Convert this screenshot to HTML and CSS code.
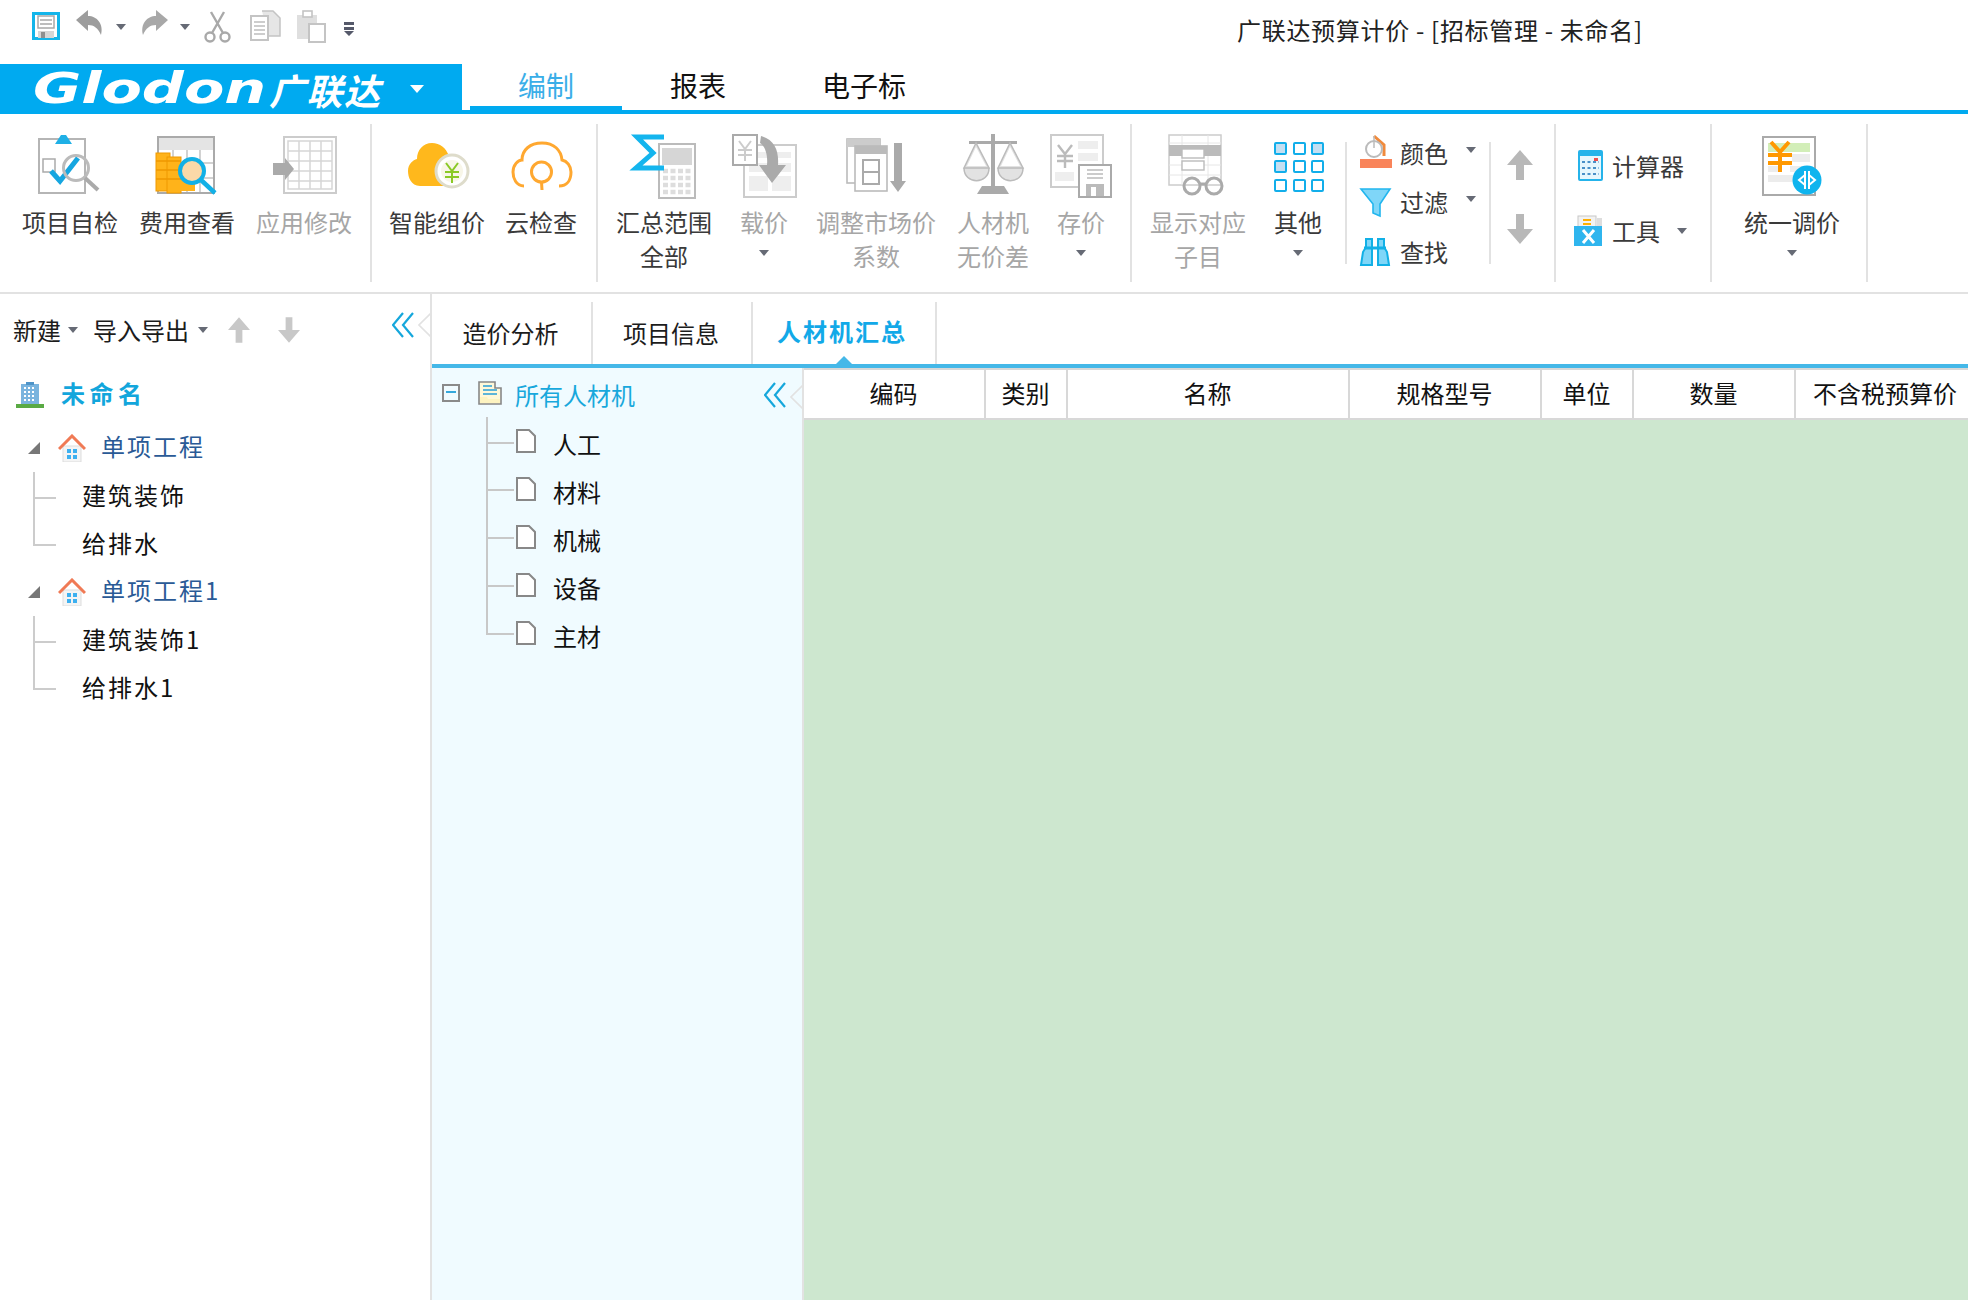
FILE: index.html
```html
<!DOCTYPE html>
<html lang="zh-CN">
<head>
<meta charset="utf-8">
<title>广联达预算计价</title>
<link rel="stylesheet" href="styles.css">
</head>
<body>
<header class="titlebar">
  <div class="qat">
    <svg width="44" height="64" viewBox="24 0 44 64"><rect x="33.5" y="13.5" width="25" height="25" fill="#fff" stroke="#13b5ea" stroke-width="3"/><rect x="38" y="16" width="16" height="12" fill="#fff" stroke="#a8a8a8" stroke-width="1.5"/><path d="M40 20H52M40 24H52" stroke="#a8a8a8" stroke-width="1.5"/><rect x="38" y="31" width="16" height="7" fill="#d6d6d6"/><rect x="41" y="32" width="4" height="6" fill="#8f8f8f"/></svg>
    <svg width="40" height="64" viewBox="68 0 40 64"><path d="M76 20L88 10V16C97 16 104 24 101 35C98 28 94 25 88 25V31Z" fill="#9d9d9d"/></svg>
    <svg width="26" height="64" viewBox="108 0 26 64"><path d="M116 24H126L121 30Z" fill="#666a75"/></svg>
    <svg width="40" height="64" viewBox="134 0 40 64"><path d="M168 20L156 10V16C147 16 140 24 143 35C146 28 150 25 156 25V31Z" fill="#a8a8a8"/></svg>
    <svg width="22" height="64" viewBox="174 0 22 64"><path d="M180 24H190L185 30Z" fill="#666a75"/></svg>
    <svg width="44" height="64" viewBox="196 0 44 64"><g fill="none" stroke="#a9a9a9" stroke-width="2.4"><circle cx="210" cy="37" r="4.5"/><circle cx="225" cy="37" r="4.5"/><path d="M212 33L224 12M223 33L211 12"/></g></svg>
    <svg width="48" height="64" viewBox="240 0 48 64"><path d="M262 11H273L280 18V36H268" fill="#e6e6e6" stroke="#c4c4c4" stroke-width="1.5"/><rect x="251" y="16" width="17" height="24" fill="#fff" stroke="#c4c4c4" stroke-width="2"/><path d="M254 22H265M254 26H265M254 30H265M254 34H265" stroke="#bdbdbd" stroke-width="1.5"/></svg>
    <svg width="48" height="64" viewBox="288 0 48 64"><rect x="297" y="15" width="20" height="24" fill="#dfdfdf"/><rect x="303" y="11" width="9" height="6" fill="#fff" stroke="#c4c4c4" stroke-width="1.6"/><rect x="309" y="24" width="16" height="18" fill="#fff" stroke="#c4c4c4" stroke-width="2"/></svg>
    <svg width="26" height="64" viewBox="336 0 26 64"><path d="M344 22H354V25H344ZM344 27H354V30H344ZM344 31H354L349 36Z" fill="#55596a"/></svg>
  </div>
  <h1 class="wintitle">广联达预算计价 - [招标管理 - 未命名]</h1>
</header>

<nav class="tabbar">
  <div class="logo">
    <span class="logo-en">Glodon</span><span class="logo-cn">广联达</span><span class="logo-caret"></span>
  </div>
  <div class="menu">
    <span class="menu-tab is-active">编制</span>
    <span class="menu-tab report">报表</span>
    <span class="menu-tab esign">电子标</span>
  </div>
</nav>

<section class="ribbon">
  <div class="group g1">
    <div class="item">
      <svg class="ic" viewBox="35 130 70 70"><rect x="39" y="139" width="46" height="54" fill="#fff" stroke="#b5b5b5" stroke-width="2"/><path d="M55 144L61 135H66L72 144Z" fill="#1fb0e6"/><rect x="43" y="159" width="12" height="13" fill="none" stroke="#aaa" stroke-width="1.5"/><path d="M51 171L60 181L78 158" fill="none" stroke="#16a6e0" stroke-width="5"/><circle cx="76" cy="168" r="12.5" fill="none" stroke="#bbb" stroke-width="3"/><path d="M85 178L98 190" stroke="#aaa" stroke-width="4"/></svg>
      <span class="lb">项目自检</span>
    </div>
    <div class="item">
      <svg class="ic" viewBox="153 130 70 70"><rect x="159" y="137" width="56" height="56" fill="#fff" stroke="#aaa" stroke-width="2"/><rect x="160" y="138" width="54" height="12" fill="#e4e4e4"/><path d="M174 150V192M188 150V192M201 150V192M160 163H214M160 178H214" stroke="#c4c4c4" stroke-width="1.5"/><rect x="157" y="153" width="14" height="38" fill="#ffb31a" stroke="#f09a00"/><rect x="168" y="157" width="14" height="36" fill="#ffb31a" stroke="#f09a00"/><rect x="181" y="166" width="15" height="25" fill="#ffb31a"/><path d="M157 161H182M157 170H182M157 179H182" stroke="#ef9800" stroke-width="1.4"/><circle cx="193" cy="171" r="12" fill="#fbd9a8" stroke="#12b0e6" stroke-width="4"/><path d="M202 180L216 193" stroke="#12b0e6" stroke-width="4.5"/></svg>
      <span class="lb">费用查看</span>
    </div>
    <div class="item is-off">
      <svg class="ic" viewBox="268 130 70 70"><rect x="283" y="137" width="52" height="56" fill="#fff" stroke="#ccc" stroke-width="2"/><rect x="287" y="141" width="44" height="48" fill="none" stroke="#d6d6d6" stroke-width="1.5"/><path d="M298 141V189M309 141V189M320 141V189M287 151H331M287 161H331M287 171H331M287 181H331" stroke="#d6d6d6" stroke-width="1.5"/><path d="M272 163H284V158L293 169L284 180V175H272Z" fill="#aaa"/></svg>
      <span class="lb">应用修改</span>
    </div>
  </div>

  <div class="group g2">
    <div class="item">
      <svg class="ic" viewBox="402 130 70 70"><path d="M420 186C411 186 408 177 408 171C408 164 413 160 417 159C417 150 423 143 432 143C440 143 446 148 449 156V186Z" fill="#ffb81c"/><circle cx="452" cy="171" r="16" fill="#fff" stroke="#dedccb" stroke-width="3"/><circle cx="452" cy="171" r="11" fill="#f8f6e8"/><path d="M446 163L452 171L458 163M445 172H459M445 177H459M452 171V183" fill="none" stroke="#8ac926" stroke-width="2"/></svg>
      <span class="lb">智能组价</span>
    </div>
    <div class="item">
      <svg class="ic" viewBox="507 130 70 70"><g fill="none" stroke="#ffa830" stroke-width="3"><path d="M525 186C517 186 514 178 514 172C514 165 519 160 523 160C523 150 531 143 543 143C555 143 562 150 563 160C568 161 572 166 572 172C572 180 568 186 560 186"/><circle cx="542.5" cy="172" r="10"/><path d="M542.5 182L543 190"/></g></svg>
      <span class="lb">云检查</span>
    </div>
  </div>

  <div class="group g3">
    <div class="item">
      <svg class="ic" viewBox="629 130 70 70"><rect x="659" y="144" width="36" height="54" fill="#fff" stroke="#bbb" stroke-width="2"/><rect x="662" y="148" width="30" height="17" fill="#d6d6d6"/><path d="M663 171H692M663 178H692M663 185H692M663 192H692" stroke="#ddd" stroke-width="4.5" stroke-dasharray="5 2.5"/><path d="M664 137H637L653 153L636 168H664" fill="none" stroke="#14b5ee" stroke-width="5"/></svg>
      <span class="lb">汇总范围</span><span class="lb">全部</span>
    </div>
    <div class="item is-off">
      <svg class="ic" viewBox="729 130 70 70"><rect x="744" y="145" width="52" height="52" fill="#fff" stroke="#ccc" stroke-width="2"/><path d="M749 152H791V158H749ZM749 163H768V172H749ZM772 163H791V172H772ZM749 176H768V191H749ZM772 176H791V191H772Z" fill="#eee"/><rect x="733" y="135" width="24" height="30" fill="#fff" stroke="#aaa" stroke-width="2"/><path d="M739 141L745 149L751 141M738 150H752M738 155H752M745 149V161" fill="none" stroke="#ccc" stroke-width="2"/><path d="M761 136C775 140 779 151 778 165H786L772 183L759 165H767C768 155 765 146 760 143Z" fill="#aaa"/></svg>
      <span class="lb">载价</span><span class="lb"><i class="caret"></i></span>
    </div>
    <div class="item is-off">
      <svg class="ic" viewBox="841 130 70 70"><rect x="847" y="139" width="33" height="44" fill="#fff" stroke="#bbb" stroke-width="1.6"/><rect x="847" y="139" width="33" height="8" fill="#ccc"/><rect x="855" y="146" width="32" height="45" fill="#fff" stroke="#bbb" stroke-width="1.6"/><rect x="855" y="146" width="32" height="8" fill="#bbb"/><rect x="863" y="160" width="16" height="24" fill="#fff" stroke="#aaa" stroke-width="2"/><path d="M863 172H879" stroke="#aaa" stroke-width="2"/><path d="M894 143H902V181H906L898 192L890 181H894Z" fill="#aaa"/></svg>
      <span class="lb">调整市场价</span><span class="lb">系数</span>
    </div>
    <div class="item is-off tight">
      <svg class="ic" viewBox="957 130 70 70"><path d="M990 134H994V186H1003L1008 194H976L981 186H990Z" fill="#aaa"/><rect x="968" y="141" width="48" height="3" fill="#aaa"/><g fill="#e2e2e2" stroke="#bbb" stroke-width="1.5"><path d="M975 143L963 168H988ZM963 168C963 185 988 185 988 168Z"/><path d="M1009 143L997 168H1022ZM997 168C997 185 1022 185 1022 168Z"/></g><path d="M975 147L966 166H985Z M1009 147L1000 166H1019Z" fill="#fff"/></svg>
      <span class="lb">人材机</span><span class="lb">无价差</span>
    </div>
    <div class="item is-off">
      <svg class="ic" viewBox="1044 130 70 70"><rect x="1049" y="135" width="52" height="52" fill="#fff" stroke="#ccc" stroke-width="2"/><path d="M1076 141H1096V149H1076ZM1076 153H1096V161H1076ZM1076 165H1096V173H1076ZM1053 172H1072V181H1053Z" fill="#eee"/><path d="M1056 145L1063 154L1070 145M1055 156H1071M1055 161H1071M1063 154V168" fill="none" stroke="#bbb" stroke-width="2.4"/><rect x="1077" y="165" width="32" height="32" fill="#fff" stroke="#aaa" stroke-width="2"/><path d="M1085 170H1101M1085 174H1101M1085 178H1101" stroke="#bbb" stroke-width="1.6"/><rect x="1084" y="184" width="18" height="12" fill="#bbb"/><rect x="1089" y="187" width="5" height="9" fill="#fff"/></svg>
      <span class="lb">存价</span><span class="lb"><i class="caret"></i></span>
    </div>
  </div>

  <div class="group g4">
    <div class="item is-off">
      <svg class="ic" viewBox="1163 130 70 70"><rect x="1169" y="135" width="52" height="50" fill="#fff" stroke="#ccc" stroke-width="1.5"/><path d="M1169 143H1221M1169 165H1221M1169 175H1221M1182 135V185M1208 135V185" stroke="#e6e6e6"/><rect x="1169" y="145" width="52" height="11" fill="#bbb"/><rect x="1182" y="149" width="22" height="9" fill="#fff" stroke="#bbb" stroke-width="1.4"/><rect x="1182" y="161" width="22" height="9" fill="#fff" stroke="#bbb" stroke-width="1.4"/><g fill="none" stroke="#aaa" stroke-width="3"><circle cx="1192" cy="186" r="8"/><circle cx="1214" cy="186" r="8"/><path d="M1200 184H1206"/></g></svg>
      <span class="lb">显示对应</span><span class="lb">子目</span>
    </div>
    <div class="item">
      <svg class="ic" viewBox="1263 130 70 70"><g stroke="#12aeea" stroke-width="2" fill="none"><rect x="1275" y="143" width="11" height="11" rx="1" fill="#c4dff2"/><rect x="1294" y="143" width="11" height="11" rx="1"/><rect x="1312" y="143" width="11" height="11" rx="1" fill="#c4dff2"/><rect x="1275" y="161" width="11" height="11" rx="1" fill="#c4dff2"/><rect x="1294" y="161" width="11" height="11" rx="1"/><rect x="1312" y="161" width="11" height="11" rx="1"/><rect x="1275" y="180" width="11" height="11" rx="1"/><rect x="1294" y="180" width="11" height="11" rx="1"/><rect x="1312" y="180" width="11" height="11" rx="1"/></g></svg>
      <span class="lb">其他</span><span class="lb"><i class="caret"></i></span>
    </div>
    <div class="vsep vsep-first"></div>
    <div class="mini">
      <div class="mini-row">
        <svg class="mi" viewBox="1356 128 44 50"><path d="M1374 136L1384 145L1384 156" fill="none" stroke="#f08a3c" stroke-width="3"/><circle cx="1374" cy="149" r="8" fill="#fff" stroke="#bbb" stroke-width="2"/><path d="M1374 136V148" stroke="#bbb" stroke-width="1.5"/><rect x="1360" y="159" width="32" height="9" fill="#f9845a"/></svg>
        <span class="lb">颜色</span><i class="caret sidecaret"></i>
      </div>
      <div class="mini-row">
        <svg class="mi" viewBox="1356 177 44 50"><path d="M1361 189H1390L1380 204V216L1373 213V204Z" fill="#7fd6f8" stroke="#22b6ee" stroke-width="1.6"/></svg>
        <span class="lb">过滤</span><i class="caret sidecaret"></i>
      </div>
      <div class="mini-row">
        <svg class="mi" viewBox="1356 227 44 50"><g fill="#7fd6f8" stroke="#12b0e6" stroke-width="2"><path d="M1361 265L1363 252L1366 247V239H1372V265Z"/><path d="M1389 265L1387 252L1384 247V239H1378V265Z"/></g><path d="M1364 248H1386" stroke="#12b0e6" stroke-width="3"/></svg>
        <span class="lb">查找</span>
      </div>
    </div>
    <div class="vsep"></div>
    <div class="arrows">
      <svg class="ar" width="26" height="30" viewBox="0 0 26 30"><path d="M13 0L26 15H17V30H9V15H0Z"/></svg>
      <svg class="ar" width="26" height="30" viewBox="0 0 26 30"><path d="M13 30L26 15H17V0H9V15H0Z"/></svg>
    </div>
  </div>

  <div class="group g5">
    <div class="tool-row">
      <svg class="ti" viewBox="1570 141 42 50"><rect x="1579" y="151" width="23" height="29" rx="1" fill="#e6f6fd" stroke="#25b3ea" stroke-width="2"/><rect x="1579" y="151" width="23" height="5" fill="#25b3ea"/><path d="M1582 162H1599M1582 168H1599M1582 174H1599" stroke="#4a90c8" stroke-width="2" stroke-dasharray="3 2.5"/><rect x="1594" y="158" width="4" height="3" fill="#ef4f4f"/></svg>
      <span class="lb">计算器</span>
    </div>
    <div class="tool-row">
      <svg class="ti" viewBox="1570 206 42 50"><rect x="1578" y="216" width="18" height="14" fill="#f2f2f2" stroke="#c8c8c8"/><rect x="1583" y="219" width="8" height="2" fill="#ffb000"/><rect x="1583" y="223" width="8" height="2" fill="#ffb000"/><rect x="1597" y="218" width="5" height="10" fill="#ddd"/><rect x="1574" y="226" width="28" height="20" fill="#2fb5ee"/><path d="M1583 230L1594 243M1594 230L1583 243" stroke="#fff" stroke-width="3"/></svg>
      <span class="lb">工具</span><i class="caret toolcaret"></i>
    </div>
  </div>

  <div class="group g6">
    <div class="item">
      <svg class="ic" viewBox="1757 130 70 70"><rect x="1763" y="137" width="52" height="58" fill="#fff" stroke="#aaa" stroke-width="2"/><rect x="1768" y="143" width="42" height="9" fill="#d2eeb8"/><path d="M1792 154H1810V162H1792ZM1768 166H1782V172H1768ZM1790 166H1806V172H1790ZM1768 175H1800V182H1768Z" fill="#ececec"/><path d="M1771 142L1780 152L1789 142M1768 155H1792M1768 163H1792M1780 152V172" fill="none" stroke="#ff9800" stroke-width="4"/><circle cx="1807" cy="180" r="14.5" fill="#0fb4ee"/><path d="M1805 171V189M1805 175L1799 180L1805 185M1809 171V189M1809 175L1815 180L1809 185" fill="none" stroke="#fff" stroke-width="2"/></svg>
      <span class="lb">统一调价</span><span class="lb"><i class="caret"></i></span>
    </div>
  </div>
</section>

<main class="workspace">
  <aside class="projects">
    <div class="proj-head">
      <span class="ptext">新建</span><i class="caret after-new"></i>
      <span class="ptext io">导入导出</span><i class="caret after-io"></i>
      <svg class="par up" width="22" height="26" viewBox="0 0 26 30"><path d="M13 0L26 15H17V30H9V15H0Z"/></svg>
      <svg class="par down" width="22" height="26" viewBox="0 0 26 30"><path d="M13 30L26 15H17V0H9V15H0Z"/></svg>
      <svg class="chev proj-chev" width="22" height="26" viewBox="0 0 22 26"><path d="M11 1L1 13L11 25M21 1L11 13L21 25"/></svg>
    </div>
    <svg class="grip proj-grip" width="13" height="26" viewBox="0 0 13 26"><path d="M13 1L1 13L13 25"/></svg>
    <div class="root">
      <svg class="bld" width="28" height="26" viewBox="0 0 28 26"><rect x="5" y="2" width="18" height="22" fill="#7ab4de"/><rect x="10" y="0" width="8" height="3" fill="#4f94c8"/><path d="M8 6H20M8 10H20M8 14H20M8 18H20" stroke="#fff" stroke-width="2" stroke-dasharray="2 2"/><rect x="0" y="22" width="28" height="4" fill="#5aaa44"/></svg>
      <span class="root-name">未命名</span>
    </div>
    <ul class="ptree">
      <li class="pnode">
        <i class="tri"></i>
        <svg class="house" width="28" height="28" viewBox="0 0 28 28"><rect x="5" y="12" width="18" height="16" fill="#f4f4f4" stroke="#ddd"/><path d="M1 15L14 2L27 15" fill="none" stroke="#f07a55" stroke-width="3"/><path d="M9 15H13V19H9ZM15 15H19V19H15ZM9 21H13V25H9ZM15 21H19V25H15Z" fill="#3db0f0"/></svg>
        <span class="pname">单项工程</span>
      </li>
      <li class="leaf first">建筑装饰</li>
      <li class="leaf">给排水</li>
      <li class="pnode">
        <i class="tri"></i>
        <svg class="house" width="28" height="28" viewBox="0 0 28 28"><rect x="5" y="12" width="18" height="16" fill="#f4f4f4" stroke="#ddd"/><path d="M1 15L14 2L27 15" fill="none" stroke="#f07a55" stroke-width="3"/><path d="M9 15H13V19H9ZM15 15H19V19H15ZM9 21H13V25H9ZM15 21H19V25H15Z" fill="#3db0f0"/></svg>
        <span class="pname">单项工程1</span>
      </li>
      <li class="leaf first">建筑装饰1</li>
      <li class="leaf">给排水1</li>
    </ul>
  </aside>

  <div class="content">
    <div class="ctabs">
      <span class="ctab t1">造价分析</span>
      <span class="ctab t2">项目信息</span>
      <span class="ctab t3 is-active">人材机汇总</span>
    </div>
    <div class="pane">
      <aside class="res">
        <div class="res-root">
          <span class="minus"></span>
          <svg class="resdoc" width="24" height="24" viewBox="0 0 24 24"><path d="M1 1H17V7H23V23H1Z" fill="#fff8d8" stroke="#888" stroke-width="1.6"/><path d="M5 5H14M5 9H19M5 13H19" stroke="#2a9fd8" stroke-width="1.6"/><path d="M2 16H9L10 18H22V22H2Z" fill="#fdf3c0"/></svg>
          <span class="res-name">所有人材机</span>
          <svg class="chev res-chev" width="22" height="26" viewBox="0 0 22 26"><path d="M11 1L1 13L11 25M21 1L11 13L21 25"/></svg>
        </div>
        <svg class="grip res-grip" width="13" height="26" viewBox="0 0 13 26"><path d="M13 1L1 13L13 25"/></svg>
        <ul class="rtree">
          <li class="rleaf first"><svg class="file" width="20" height="24" viewBox="0 0 20 24"><path d="M1 1H13L19 7V23H1Z" fill="#fff" stroke="#888" stroke-width="2"/></svg><span class="rname">人工</span></li>
          <li class="rleaf"><svg class="file" width="20" height="24" viewBox="0 0 20 24"><path d="M1 1H13L19 7V23H1Z" fill="#fff" stroke="#888" stroke-width="2"/></svg><span class="rname">材料</span></li>
          <li class="rleaf"><svg class="file" width="20" height="24" viewBox="0 0 20 24"><path d="M1 1H13L19 7V23H1Z" fill="#fff" stroke="#888" stroke-width="2"/></svg><span class="rname">机械</span></li>
          <li class="rleaf"><svg class="file" width="20" height="24" viewBox="0 0 20 24"><path d="M1 1H13L19 7V23H1Z" fill="#fff" stroke="#888" stroke-width="2"/></svg><span class="rname">设备</span></li>
          <li class="rleaf"><svg class="file" width="20" height="24" viewBox="0 0 20 24"><path d="M1 1H13L19 7V23H1Z" fill="#fff" stroke="#888" stroke-width="2"/></svg><span class="rname">主材</span></li>
        </ul>
      </aside>
      <div class="grid">
        <div class="ghead">
          <span class="gc">编码</span>
          <span class="gc">类别</span>
          <span class="gc">名称</span>
          <span class="gc">规格型号</span>
          <span class="gc">单位</span>
          <span class="gc">数量</span>
          <span class="gc last">不含税预算价</span>
        </div>
        <div class="gbody"></div>
      </div>
    </div>
  </div>
</main>
</body>
</html>
```

FILE: styles.css
```css
* { box-sizing: border-box; }
html, body { margin: 0; padding: 0; }
body {
  width: 1968px;
  height: 1300px;
  overflow: hidden;
  background: #fff;
  color: #222;
  font-family: "Noto Sans CJK SC", "Liberation Sans", sans-serif;
  font-size: 24px;
  display: flex;
  flex-direction: column;
}
ul { list-style: none; margin: 0; padding: 0; }
i { display: block; font-style: normal; }
svg { display: block; flex: none; }

/* title bar */
.titlebar { height: 64px; display: flex; flex: none; }
.qat { display: flex; padding-left: 24px; width: 1237px; }
.wintitle { margin: 0; font-size: 24px; font-weight: 400; line-height: 60px; color: #222; white-space: nowrap; letter-spacing: 0.7px; }

/* tab bar */
.tabbar { height: 50px; display: flex; flex: none; }
.logo { width: 462px; height: 50px; background: #00aaf0; color: #fff; display: flex; align-items: center; padding-left: 33px; }
.logo-en { font-family: "DejaVu Sans", sans-serif; font-style: italic; font-weight: 700; font-size: 42px; line-height: 50px; width: 236px; white-space: nowrap; transform: scaleX(1.4); transform-origin: left center; }
.logo-cn { font-size: 36px; line-height: 50px; font-weight: 700; width: 141px; letter-spacing: 1.5px; font-style: italic; white-space: nowrap; }
.logo-caret { width: 0; height: 0; border-left: 7px solid transparent; border-right: 7px solid transparent; border-top: 8px solid #fff; }
.menu { flex: 1; display: flex; border-bottom: 4px solid #00aaf0; }
.menu-tab { font-size: 28px; line-height: 42px; color: #111; white-space: nowrap; height: 46px; }
.menu-tab.is-active { color: #3aaee8; width: 152px; margin-left: 8px; text-align: center; border-bottom: 4px solid #00aaf0; height: 46px; }
.menu-tab.report { margin-left: 48px; }
.menu-tab.esign { margin-left: 96px; }

/* ribbon */
.ribbon { height: 180px; flex: none; display: flex; padding-top: 10px; border-bottom: 2px solid #e2e2e2; align-items: flex-start; }
.group { height: 158px; display: flex; flex: none; border-right: 2px solid #e2e2e2; padding-top: 6px; align-items: flex-start; }
.g1 { width: 372px; padding-left: 22px; gap: 21px; }
.g2 { width: 226px; padding-left: 17px; gap: 20px; }
.g3 { width: 534px; padding-left: 18px; gap: 28px; }
.g4 { width: 424px; padding-left: 18px; }
.g5 { width: 156px; padding: 17px 0 0 14px; flex-direction: column; gap: 15px; }
.g6 { width: 156px; padding-left: 32px; }
.g4 .item + .item { margin-left: 28px; }

.item { display: flex; flex-direction: column; align-items: center; flex: none; color: #3a3a3a; }
.item.tight { margin-left: -7px; }
.ic { width: 70px; height: 70px; margin: 0 -35px 5px; }
.lb { display: flex; align-items: center; justify-content: center; height: 34px; line-height: 34px; white-space: nowrap; color: #3a3a3a; }
.is-off .lb { color: #a6a6a6; }
.caret { width: 0; height: 0; border-left: 5px solid transparent; border-right: 5px solid transparent; border-top: 6px solid #666a75; flex: none; }
.lb .caret { margin-top: -6px; }

.vsep { width: 2px; height: 122px; margin-top: 12px; background: #e2e2e2; flex: none; }
.vsep-first { margin-left: 23px; }
.mini { width: 133px; margin-top: -2px; margin-left: 9px; flex: none; }
.mini-row { height: 49.5px; display: flex; align-items: center; }
.mi { width: 44px; height: 50px; }
.sidecaret { margin-left: 18px; margin-top: -6px; }
.arrows { width: 63px; padding-left: 16px; margin-top: 20px; display: flex; flex-direction: column; gap: 34px; flex: none; }
.ar { fill: #b8b8b8; }
.tool-row { height: 50px; display: flex; align-items: center; }
.ti { width: 42px; height: 50px; }
.toolcaret { margin-left: 17px; }

/* workspace */
.workspace { flex: 1; display: flex; min-height: 0; }
.projects { width: 430px; flex: none; position: relative; }
.proj-head { height: 72px; display: flex; align-items: center; padding-left: 13px; }
.ptext { line-height: 30px; color: #1c1c1c; white-space: nowrap; }
.after-new { margin-left: 7px; }
.io { margin-left: 15px; }
.after-io { margin-left: 9px; }
.par { fill: #c8c8c8; }
.par.up { margin-left: 20px; }
.par.down { margin-left: 28px; }
.chev { fill: none; stroke: #15a7dc; stroke-width: 2.2; }
.proj-chev { margin-left: 92px; margin-top: -10px; }
.grip { position: absolute; fill: none; stroke: #e2e2e2; stroke-width: 1.6; }
.proj-grip { left: 418px; top: 18px; }

.root { height: 58px; display: flex; align-items: center; padding-left: 16px; }
.root-name { margin-left: 17px; margin-top: -5px; font-weight: 700; color: #12a6dc; letter-spacing: 4.5px; line-height: 30px; }
.pnode { height: 48px; display: flex; align-items: center; padding-left: 28px; letter-spacing: 2px; }
.tri { width: 0; height: 0; border-left: 12px solid transparent; border-bottom: 12px solid #777; }
.house { margin-left: 18px; }
.pname { margin-left: 15px; margin-top: -4px; color: #2a5a96; white-space: nowrap; line-height: 30px; }
.leaf { height: 48px; line-height: 46px; padding-left: 82px; letter-spacing: 2px; color: #111; position: relative; }
.leaf::before { content: ""; position: absolute; left: 33px; top: -24px; width: 21px; height: 48px; border-left: 2px solid #ccc; border-bottom: 2px solid #ccc; }
.leaf.first::before { top: 0; height: 25px; }

.content { flex: 1; min-width: 0; border-left: 2px solid #e2e2e2; display: flex; flex-direction: column; }
.ctabs { height: 74px; flex: none; display: flex; padding-top: 8px; border-bottom: 4px solid #45b8e8; }
.ctab { height: 62px; line-height: 62px; text-align: center; border-right: 2px solid #e2e2e2; padding-right: 2px; color: #1c1c1c; white-space: nowrap; position: relative; }
.t1 { width: 161px; }
.t2 { width: 160px; }
.t3 { width: 184px; }
.ctab.is-active { color: #12a9e8; font-weight: 700; letter-spacing: 2px; line-height: 58px; padding-right: 4px; }
.ctab.is-active::after { content: ""; position: absolute; left: 83px; bottom: 0; width: 0; height: 0; border-left: 8px solid transparent; border-right: 8px solid transparent; border-bottom: 8px solid #45b8e8; }

.pane { flex: 1; min-height: 0; display: flex; }
.res { width: 372px; flex: none; background: #f0fbff; border-right: 2px solid #e2e2e2; position: relative; }
.res-root { height: 49px; display: flex; align-items: center; padding: 1px 0 0 10px; }
.minus { width: 18px; height: 18px; border: 2px solid #8a8a8a; position: relative; flex: none; }
.minus::after { content: ""; position: absolute; left: 2px; right: 2px; top: 5px; height: 2px; background: #35a8dc; }
.resdoc { margin-left: 18px; }
.res-name { margin-left: 13px; margin-top: 4px; color: #18a8dc; line-height: 30px; white-space: nowrap; }
.res-chev { margin-left: 129px; margin-top: 4px; }
.res-grip { left: 358px; top: 16px; }
.rleaf { height: 48px; display: flex; align-items: center; padding-left: 84px; position: relative; color: #111; }
.rleaf::before { content: ""; position: absolute; left: 54px; top: -24px; width: 26px; height: 48px; border-left: 2px solid #c8c8c8; border-bottom: 2px solid #c8c8c8; }
.rleaf.first::before { top: 0; height: 25px; }
.rname { margin-left: 17px; margin-top: 6px; line-height: 30px; }

.grid { flex: 1; min-width: 0; display: flex; flex-direction: column; }
.ghead { height: 52px; flex: none; border-top: 2px solid #d8d8d8; border-bottom: 2px solid #d8d8d8; display: grid; grid-template-columns: 182px 82px 282px 192px 92px 162px 1fr; background: #fff; }
.gc { text-align: center; line-height: 46px; border-right: 2px solid #d8d8d8; padding-right: 1px; color: #111; white-space: nowrap; overflow: hidden; }
.gc.last { border-right: 0; text-align: left; padding-left: 17px; }
.gbody { flex: 1; background: #cde7cf; }
```
